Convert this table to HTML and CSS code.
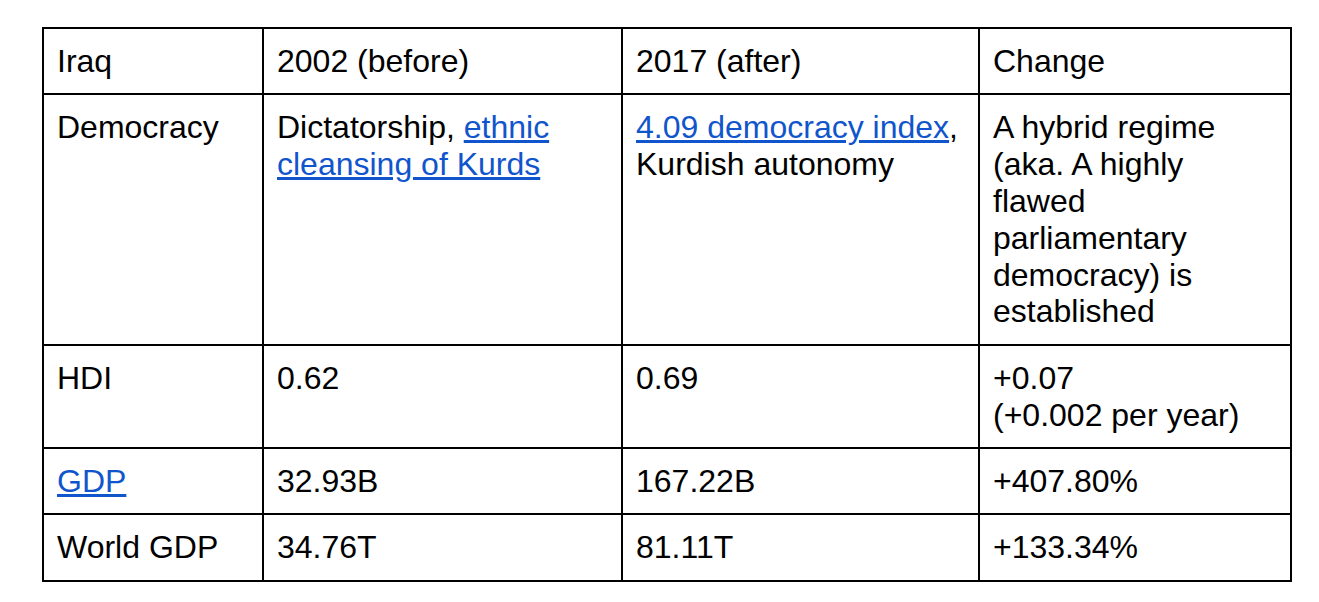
FILE: index.html
```html
<!DOCTYPE html>
<html lang="en">
<head>
<meta charset="utf-8">
<title>Iraq comparison</title>
<link rel="stylesheet" href="styles.css">
</head>
<body>
<div class="page">
  <table class="data">
    <colgroup>
      <col class="c1">
      <col class="c2">
      <col class="c3">
      <col class="c4">
    </colgroup>
    <tbody>
      <tr>
        <td>Iraq</td>
        <td>2002 (before)</td>
        <td>2017 (after)</td>
        <td>Change</td>
      </tr>
      <tr>
        <td>Democracy</td>
        <td>Dictatorship, <a href="#">ethnic cleansing of Kurds</a></td>
        <td><a href="#">4.09 democracy index</a>, Kurdish autonomy</td>
        <td>A hybrid regime (aka. A highly flawed parliamentary democracy) is established</td>
      </tr>
      <tr>
        <td>HDI</td>
        <td>0.62</td>
        <td>0.69</td>
        <td>+0.07<br>(+0.002 per year)</td>
      </tr>
      <tr>
        <td><a href="#">GDP</a></td>
        <td>32.93B</td>
        <td>167.22B</td>
        <td>+407.80%</td>
      </tr>
      <tr>
        <td>World GDP</td>
        <td>34.76T</td>
        <td>81.11T</td>
        <td>+133.34%</td>
      </tr>
    </tbody>
  </table>
</div>
</body>
</html>
```
FILE: styles.css
```css
html, body {
  margin: 0;
  padding: 0;
  background: #ffffff;
}

.page {
  padding: 27px 0 0 42px;
}

.data {
  border-collapse: collapse;
  table-layout: fixed;
  width: 1248px;
  font-family: "Liberation Sans", Arial, sans-serif;
  font-size: 32px;
  line-height: 1.15;
  color: #000000;
}

.c1 { width: 220px; }
.c2 { width: 359px; }
.c3 { width: 357px; }
.c4 { width: 312px; }

.data td {
  border: 2px solid #000000;
  padding: 14px 13px 13.6px 13px;
  vertical-align: top;
  text-align: left;
}

.data a {
  color: #1155cc;
  text-decoration: underline;
}
```
